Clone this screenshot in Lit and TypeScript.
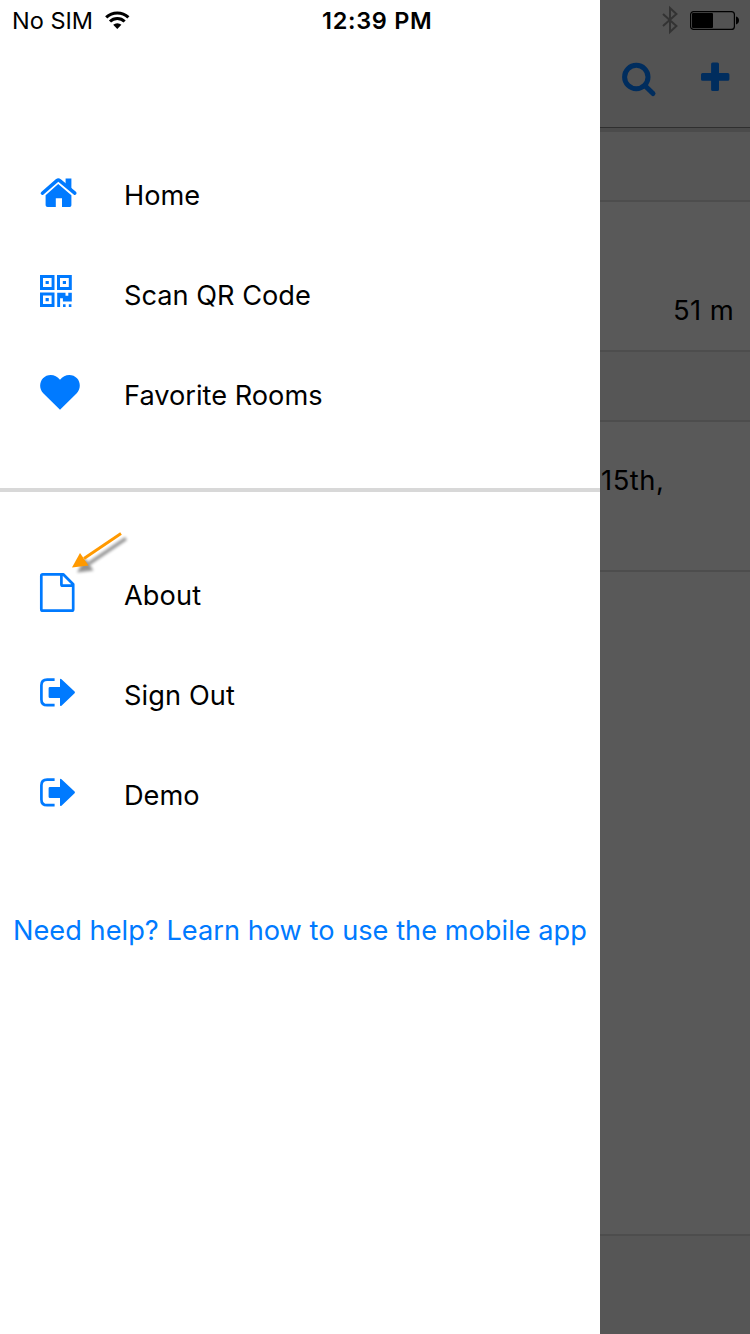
import { LitElement, html, css, svg } from "lit";
import { customElement } from "lit/decorators.js";
import { classMap } from "lit/directives/class-map.js";

const signOut = svg`
  <path d="M14.6 1.6H7.2Q1.4 1.6 1.4 7.2V21.4Q1.4 27.2 7.2 27.2H14.6" fill="none" stroke="currentColor" stroke-width="2.7"/>
  <path d="M10 9H20V1.8Q20 .2 21.5 1.2L34.6 13.5Q35.4 14.4 34.6 15.2L21.5 27.7Q20 28.6 20 27V20H10Q8.6 20 8.6 18.7V10.3Q8.6 9 10 9Z" fill="currentColor"/>`;

const icons = {
  home: svg`
    <path d="M2.4 15.2L16.9 2.6Q18.3 1.5 19.7 2.6L34.8 15.2" fill="none" stroke="currentColor" stroke-width="3.5" stroke-linecap="round" stroke-linejoin="round"/>
    <path d="M25.6 .4H31.4V11.6L25.6 6.6Z" fill="currentColor"/>
    <path d="M18.2 6.1L31.4 17.2V27.3Q31.4 29 29.8 29H22V20.2H15.8V29H7.6Q5.6 29 5.6 27.3V17.2Z" fill="currentColor"/>`,
  qr: svg`
    <path fill="currentColor" fill-rule="evenodd" d="M0 0H14.5V15H0ZM3 3V12H11.6V3ZM17 0H31.8V15H17ZM20 3V12H28.8V3ZM0 17.4H14.5V32H0ZM3 20.4V29H11.6V20.4ZM5.6 6H8.8V9H5.6ZM22.8 6H26V9H22.8ZM5.6 23H8.8V26.2H5.6Z"/>
    <path fill="currentColor" d="M17.2 17.8H25.5V20.7H28.3V17.8H31.8V26.4H22.9V23.2H20.1V32H17.2ZM23 29.3H25.6V32H23ZM28.8 29.3H31.4V32H28.8Z"/>`,
  heart: svg`
    <path fill="currentColor" d="M20 4.8C24.5-1.6 33-1.2 37 3.2C40.7 7.2 41 14 36.5 18.4L20 34.8L3.5 18.4C-1 14-.7 7.2 3 3.2C7-1.2 15.5-1.6 20 4.8Z"/>`,
  page: svg`
    <path d="M2.8 1.3H23.2L33.2 11.2V36.2Q33.2 37.7 31.7 37.7H2.8Q1.3 37.7 1.3 36.2V2.8Q1.3 1.3 2.8 1.3ZM21.4 1.3V11.5Q21.4 12.7 22.6 12.7H33.2" fill="none" stroke="currentColor" stroke-width="2.7" stroke-linejoin="round"/>`,
  out: signOut,
};

type Item = { label: string; icon: keyof typeof icons; w: number; h: number; top: number; cls: string };

const primary: Item[] = [
  { label: "Home", icon: "home", w: 37, h: 29, top: 33, cls: "l-home" },
  { label: "Scan QR Code", icon: "qr", w: 32, h: 32, top: 30, cls: "l-scan" },
  { label: "Favorite Rooms", icon: "heart", w: 40, h: 35, top: 30, cls: "l-fav" },
];
const secondary: Item[] = [
  { label: "About", icon: "page", w: 35, h: 39, top: 28, cls: "l-about" },
  { label: "Sign Out", icon: "out", w: 36, h: 29, top: 33, cls: "l-out" },
  { label: "Demo", icon: "out", w: 36, h: 29, top: 33, cls: "l-demo" },
];

@customElement("side-drawer")
class SideDrawer extends LitElement {
  static styles = css`
    :host { display: block; position: relative; height: 1334px; background: #fff; color: #000; }
    .status { display: grid; grid-template-columns: 310px 290px; height: 40px; font-size: 23.5px; line-height: 42px; white-space: nowrap; }
    .carrier { display: flex; align-items: flex-start; padding-left: 12px; gap: 11.5px; }
    .carrier svg { margin-top: 10px; }
    .time { padding-left: 12px; font-weight: 600; letter-spacing: 0.7px; }
    nav.first { padding-top: 105px; height: 343px; }
    nav.second { padding-top: 53px; height: 335px; border-top: 4px solid #d8d8d8; }
    .item { display: grid; grid-template-columns: 84px 1fr; height: 100px; padding-left: 40px; font-size: 27.2px; line-height: 102px; }
    .icon { display: block; line-height: 0; color: #007aff; }
    .l-about, .l-out { letter-spacing: 0.1px; }
    svg { display: block; overflow: visible; }
    .help { padding: 34px 0 0 13px; font-size: 27.2px; line-height: 34px; letter-spacing: 0.02px; color: #007aff; white-space: nowrap; text-decoration: none; display: block; }
    .pointer { position: absolute; left: 66px; top: 526px; }
  `;
  item(i: Item) {
    return html`<div class="item">
      <span class="icon"><svg width=${i.w} height=${i.h} viewBox="0 0 ${i.w} ${i.h}" style="margin-top:${i.top}px">${icons[i.icon]}</svg></span>
      <span class=${classMap({ label: true, [i.cls]: true })}>${i.label}</span>
    </div>`;
  }
  render() {
    return html`
      <div class="status">
        <div class="carrier"><span>No SIM</span>
          <svg width="25" height="20" viewBox="0 0 25 20"><g fill="none" stroke="#000" stroke-width="3.1"><path d="M1.2 7.4A16.1 16.1 0 0 1 23.4 7.4"/><path d="M5 11.5A10.4 10.4 0 0 1 19.6 11.5"/></g><path d="M8.2 14.8A6 6 0 0 1 16.4 14.8L12.3 18.9Z"/></svg>
        </div>
        <div class="time">12:39 PM</div>
      </div>
      <nav class="first">${primary.map((i) => this.item(i))}</nav>
      <nav class="second">${secondary.map((i) => this.item(i))}</nav>
      <a class="help">Need help? Learn how to use the mobile app</a>
      <svg class="pointer" width="64" height="54" viewBox="0 0 64 54">
        <defs><filter id="soft" x="-30%" y="-30%" width="160%" height="160%"><feGaussianBlur stdDeviation="1.8"/></filter></defs>
        <g transform="translate(5 5)" filter="url(#soft)" opacity=".42"><path d="M55 7.5L18 32.5" stroke="#000" stroke-width="3.4"/><path d="M6 41.5L14 27L22.5 39.5Z"/></g>
        <path d="M55 7.5L18 32.5" stroke="#ff9900" stroke-width="2.9"/><path d="M6 41.5L14 27L22.5 39.5Z" fill="#ff9900"/>
      </svg>`;
  }
}

@customElement("dimmed-page")
class DimmedPage extends LitElement {
  static styles = css`
    :host { display: block; height: 1334px; overflow: hidden; background: #595959; color: #000; font-size: 27.4px; }
    svg { display: block; overflow: visible; }
    .header { height: 127px; background: #535353; border-bottom: 1px solid #2f2f2f; }
    .status { display: flex; height: 40px; padding: 6px 0 0 62px; gap: 12px; box-sizing: border-box; }
    .status .battery { margin-top: 5px; }
    .actions { display: flex; padding: 22px 0 0 22px; gap: 45px; }
    .band { height: 68px; background: #565656; border-bottom: 2px solid #4d4d4d; }
    .band.top { border-top: 4px solid #4b4b4b; }
    .row { height: 148px; border-bottom: 2px solid #4d4d4d; white-space: nowrap; }
    .distance { padding: 91px 0 0 73px; line-height: 34px; letter-spacing: 0.4px; }
    .date { padding: 41px 0 0 1px; line-height: 34px; letter-spacing: 0.5px; }
    .space { height: 662px; border-bottom: 2px solid #4d4d4d; }
    .tabs { height: 98px; background: #565656; }
  `;
  render() {
    return html`
      <div class="header">
        <div class="status">
          <svg width="16" height="28" viewBox="0 0 16 28"><path d="M1 8L14.4 20L8 26V2L14.4 8L1 20" fill="none" stroke="#333" stroke-width="2"/></svg>
          <svg class="battery" width="50" height="19" viewBox="0 0 50 19"><rect x=".6" y=".6" width="43.8" height="17.8" rx="3" fill="none" stroke="#000" stroke-width="1.2"/><rect x="2" y="2" width="21" height="15" rx="1"/><path d="M46 5.6Q49 6.5 49 9.5T46 13.4Z"/></svg>
        </div>
        <div class="actions">
          <svg width="34" height="34" viewBox="0 0 34 34"><g fill="none" stroke="#002d5e" stroke-width="5"><circle cx="14.3" cy="15" r="11.7"/><path d="M23 23.7L31 31.5" stroke-linecap="round"/></g></svg>
          <svg width="29" height="30" viewBox="0 0 29 30"><path fill="#002d5e" d="M12 .4H16.4Q18 .4 18 2V11H26.8Q28.4 11 28.4 12.6V17.2Q28.4 18.8 26.8 18.8H18V27.4Q18 29 16.4 29H11.7Q10.1 29 10.1 27.4V18.8H1.6Q0 18.8 0 17.2V12.6Q0 11 1.6 11H10.1V2Q10.1 .4 11.7 .4Z"/></svg>
        </div>
      </div>
      <div class="band top"></div>
      <div class="row"><div class="distance">51 m</div></div>
      <div class="band"></div>
      <div class="row"><div class="date">15th,</div></div>
      <div class="space"></div>
      <div class="tabs"></div>`;
  }
}

@customElement("app-root")
class AppRoot extends LitElement {
  static styles = css`
    :host { display: grid; grid-template-columns: 600px 150px; width: 750px; height: 1334px; overflow: hidden; font-family: Inter, "Liberation Sans", sans-serif; }
  `;
  render() {
    return html`<side-drawer></side-drawer><dimmed-page></dimmed-page>`;
  }
}
